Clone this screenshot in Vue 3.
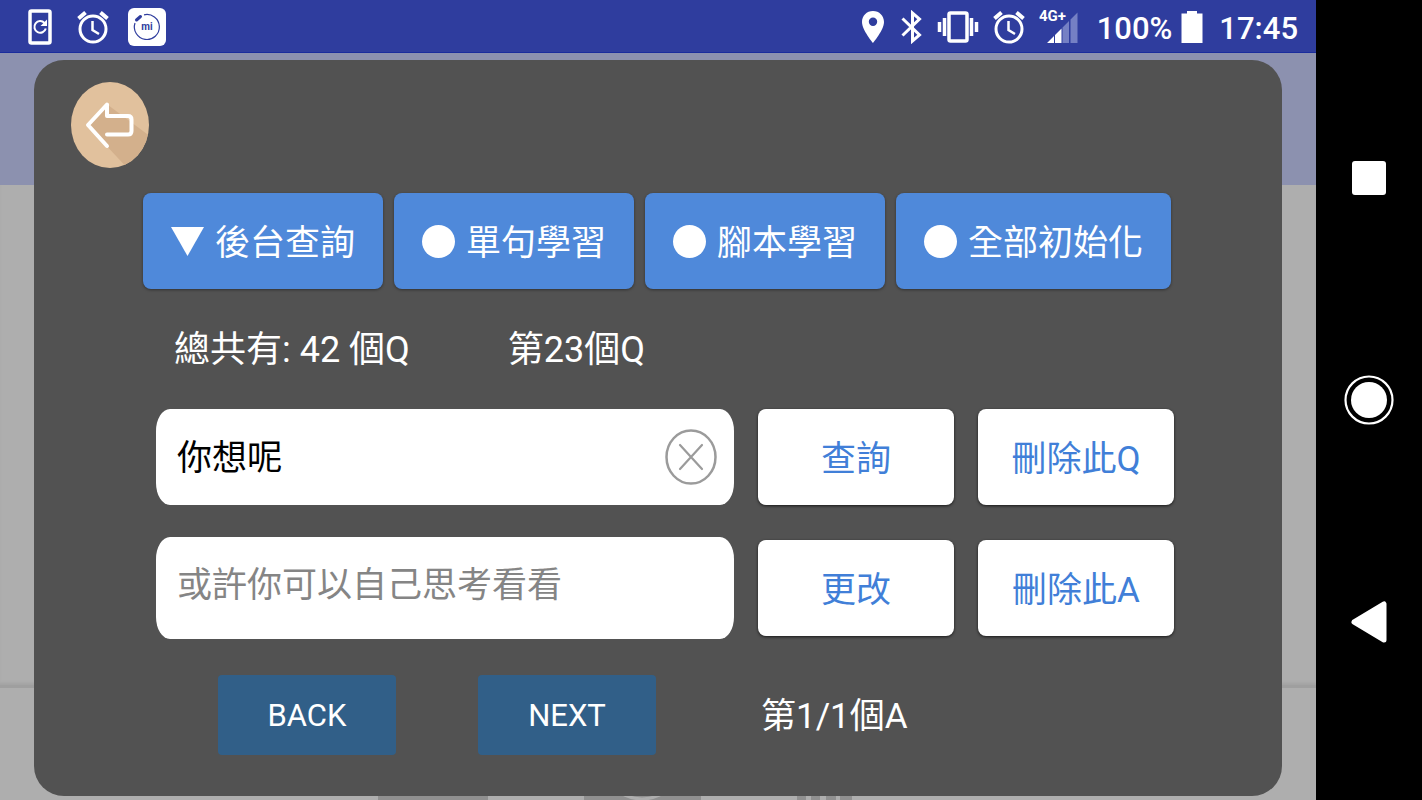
<script setup>
import { ref } from 'vue'

const tabs = [
  { id: 'query', label: '後台查詢' },
  { id: 'sentence', label: '單句學習' },
  { id: 'script', label: '腳本學習' },
  { id: 'reset', label: '全部初始化' },
]

const activeTab = ref('query')
const question = ref('你想呢')
const answer = ref('')
</script>

<template>
  <div class="device">
    <div class="screen">
      <header class="status">
        <div class="status__group status__group--left">
          <svg width="26" height="36" viewBox="0 0 26 36" fill="none" stroke="#fff">
            <rect x="3" y="2" width="20" height="32" rx="1.500" stroke-width="3.500" />
            <path d="M17.500 14A5.800 5.800 0 1 0 18.800 19.500" stroke-width="2" />
            <path d="M20 10.500v6.500h-6.500z" fill="#fff" stroke="none" />
          </svg>
          <svg width="32" height="34" viewBox="0 0 32 34" fill="none" stroke="#fff">
            <circle cx="16" cy="19" r="13" stroke-width="3" />
            <path d="M15.500 11v9l6.500 4" stroke-width="2.500" />
            <path d="M1.500 8.500 8.500 2.500M30.500 8.500 23.500 2.500" stroke-width="4" />
          </svg>
          <svg class="status__app" width="38" height="38" viewBox="0 0 38 38">
            <rect width="38" height="38" rx="6" fill="#fff" />
            <path d="M16 6.800A12.500 12.500 0 1 1 7 15" fill="none" stroke="#2f3d9e" stroke-width="1.200" />
            <path d="M8.500 12 12.500 8.500" stroke="#2f3d9e" stroke-width="3" stroke-linecap="round" />
            <text x="19" y="22" text-anchor="middle" class="mi">mi</text>
          </svg>
        </div>
        <div class="status__group status__group--right">
          <svg width="24" height="34" viewBox="0 0 24 34" fill="#fff">
            <path fill-rule="evenodd" d="M12 1C5.700 1 1 5.800 1 12c0 8 11 21 11 21s11-13 11-21C23 5.800 18.300 1 12 1zm0 15a4.200 4.200 0 1 1 0-8.400 4.200 4.200 0 0 1 0 8.400z" />
          </svg>
          <svg class="status__bt" width="22" height="34" viewBox="0 0 22 34" fill="none" stroke="#fff" stroke-width="3">
            <path d="M1.500 8.500 18.500 25 11.500 31V3L18.500 9 1.500 25.500" />
          </svg>
          <svg width="42" height="32" viewBox="0 0 42 32" fill="none" stroke="#fff" stroke-width="3.500">
            <rect x="12" y="2" width="18" height="28" rx="1.500" />
            <path d="M7.500 7v18M34.500 7v18M2.500 11v10M39.500 11v10" />
          </svg>
          <svg width="32" height="34" viewBox="0 0 32 34" fill="none" stroke="#fff">
            <circle cx="16" cy="19" r="13" stroke-width="3" />
            <path d="M15.500 11v9l6.500 4" stroke-width="2.500" />
            <path d="M1.500 8.500 8.500 2.500M30.500 8.500 23.500 2.500" stroke-width="4" />
          </svg>
          <svg width="40" height="44" viewBox="0 -4 40 44">
            <path d="M8 34 15 27V34zM16 26 22.500 19.500V34H16z" fill="#fff" />
            <path d="M23.500 18.500l6.500-6.500V34h-6.500zM31.500 10.500 38.500 3.500V34h-7z" fill="#7580c4" />
            <text x="0" y="12" class="net">4G+</text>
          </svg>
          <span class="status__battery">100%</span>
          <svg width="22" height="34" viewBox="0 0 22 34" fill="#fff">
            <path d="M6 1h10v2.500h5.500V33H.500V3.500H6z" />
          </svg>
          <span class="status__time">17:45</span>
        </div>
      </header>

      <div class="stage">
        <div class="backdrop">
          <div class="backdrop__bar"></div>
          <div class="backdrop__page"></div>
          <div class="backdrop__foot">
            <svg width="100%" height="5" viewBox="0 0 1316 5" preserveAspectRatio="none" fill="#909090">
              <path d="M378 0h110v5H378zM584 0h117v5H584zM797 0h9v5h-9zM811 0h9v5h-9zM826 0h10v5h-10zM840 0h12v5h-12z" />
              <path d="M624 0q18 8 36 0" fill="none" stroke="#aeaeae" stroke-width="3" />
            </svg>
          </div>
        </div>

        <main class="panel">
          <button type="button" class="back" aria-label="返回">
            <svg width="78" height="86" viewBox="0 0 78 86">
              <defs>
                <clipPath id="disc"><ellipse cx="39" cy="43" rx="39" ry="43" /></clipPath>
              </defs>
              <ellipse cx="39" cy="43" rx="39" ry="43" fill="#e1c19d" />
              <path d="M37 23 84 58 60 90 17 44z" fill="#d3b08c" clip-path="url(#disc)" />
              <path
                d="M36 64 17 43 36 22.500V34h21q3.500 0 3.500 3.500v11.500q0 3.500-3.500 3.500H36"
                fill="none" stroke="#fff" stroke-width="4" stroke-linecap="round" stroke-linejoin="round"
              />
            </svg>
          </button>

          <div class="body">
            <nav class="tabs">
              <button
                v-for="t in tabs"
                :key="t.id"
                type="button"
                class="tab"
                @click="activeTab = t.id"
              >
                <svg width="33" height="33" viewBox="0 0 33 33" fill="#fff">
                  <path v-if="t.id === activeTab" d="M0 2h33L16.500 31z" />
                  <circle v-else cx="16.500" cy="16.500" r="16.500" />
                </svg>
                <span class="tab__label">{{ t.label }}</span>
              </button>
            </nav>

            <div class="info">
              <span>總共有: 42 個Q</span>
              <span>第23個Q</span>
            </div>

            <form class="form" @submit.prevent>
              <div class="row">
                <div class="field">
                  <input v-model="question" class="field__input" type="text" aria-label="Q" />
                  <button type="button" class="field__clear" aria-label="清除" @click="question = ''">
                    <svg width="52" height="56" viewBox="0 0 52 56" fill="none" stroke="#9b9b9b">
                      <ellipse cx="26" cy="28" rx="24.500" ry="26.500" stroke-width="2.500" />
                      <path d="M15 16 37 40M37 16 15 40" stroke-width="2.200" stroke-linecap="round" />
                    </svg>
                  </button>
                </div>
                <button type="button" class="action">查詢</button>
                <button type="button" class="action">刪除此Q</button>
              </div>
              <div class="row">
                <div class="field field--answer">
                  <input
                    v-model="answer"
                    class="field__input"
                    type="text"
                    placeholder="或許你可以自己思考看看"
                    aria-label="A"
                  />
                </div>
                <button type="button" class="action">更改</button>
                <button type="button" class="action">刪除此A</button>
              </div>
            </form>

            <div class="pager">
              <button type="button" class="step">BACK</button>
              <button type="button" class="step">NEXT</button>
              <span class="pager__text">第1/1個A</span>
            </div>
          </div>
        </main>
      </div>
    </div>

    <nav class="keys">
      <button type="button" class="key" aria-label="Recents">
        <svg width="50" height="50" viewBox="0 0 50 50" fill="#fff">
          <rect x="8" y="8" width="34" height="34" rx="3" />
        </svg>
      </button>
      <button type="button" class="key" aria-label="Home">
        <svg width="50" height="50" viewBox="0 0 50 50" fill="#fff">
          <circle cx="25" cy="25" r="23.500" fill="none" stroke="#fff" stroke-width="2.200" />
          <circle cx="25" cy="25" r="18" />
        </svg>
      </button>
      <button type="button" class="key" aria-label="Back">
        <svg width="50" height="50" viewBox="0 0 50 50" fill="#fff" stroke="#fff">
          <path d="M10 25 40 7v36z" stroke-width="5" stroke-linejoin="round" />
        </svg>
      </button>
    </nav>
  </div>
</template>

<style>
body {
  margin: 0;
  background: #000;
}
</style>

<style scoped>
.device {
  display: flex;
  min-height: 100vh;
  font-family: Roboto, 'Noto Sans CJK TC', sans-serif;
  font-size: 35px;
  line-height: 42px;
  color: #fff;
}
button,
input {
  margin: 0;
  padding: 0;
  border: 0;
  background: transparent;
  font: inherit;
  color: inherit;
}
button {
  cursor: pointer;
}
svg {
  display: block;
  flex: none;
}
.screen {
  flex: 1;
  min-width: 0;
  display: flex;
  flex-direction: column;
}

.status {
  display: flex;
  justify-content: space-between;
  align-items: center;
  box-sizing: border-box;
  height: 53px;
  padding: 2px 18px 0 27px;
  background: #2f3d9e;
  border-bottom: 1px solid #1a2c9c;
  font-size: 31px;
  font-weight: 500;
}
.status__group {
  display: flex;
  align-items: center;
}
.status__group--left {
  gap: 24px;
}
.status__app {
  margin-left: -5px;
}
.status__group--right {
  gap: 14px;
}
.status__bt {
  margin-left: 2px;
}
.status__battery,
.status__time {
  padding-top: 3px;
}
.status__battery {
  margin-left: 4px;
  margin-right: -5px;
}
.status__time {
  margin-left: 2px;
}
.mi {
  font: 700 10px Roboto, sans-serif;
  fill: #2f3d9e;
}
.net {
  font: 700 15px Roboto, sans-serif;
  fill: #fff;
}

.stage {
  flex: 1;
  display: grid;
}
.backdrop,
.panel {
  grid-area: 1 / 1;
}
.backdrop {
  display: flex;
  flex-direction: column;
  background: #aeaeae;
}
.backdrop__bar {
  height: 132px;
  background: #8c91af;
}
.backdrop__page {
  flex: 1;
  border-bottom: 3px solid #9f9f9f;
  box-shadow: inset 0 -3px 3px -1px #a3a3a3;
}
.backdrop__foot {
  display: flex;
  align-items: flex-end;
  height: 112px;
}

.panel {
  margin: 7px 34px 4px;
  padding: 22px 37px 0;
  border-radius: 30px;
  background: #525252;
}
.back {
  display: block;
}
.body {
  padding: 25px 71px 0 72px;
}
.tabs {
  display: flex;
  gap: 11px;
}
.tab {
  display: flex;
  align-items: center;
  gap: 11px;
  height: 96px;
  padding: 0 28px;
  border-radius: 8px;
  background: #4f89da;
  box-shadow: 0 1px 3px rgba(0, 0, 0, 0.4);
  white-space: nowrap;
}
.tab__label {
  padding-top: 5px;
}
.info {
  display: flex;
  gap: 98px;
  padding: 40px 31px 38px;
  font-size: 36px;
}
.form {
  display: flex;
  flex-direction: column;
  gap: 32px;
  padding-left: 13px;
}
.row {
  display: flex;
  align-items: center;
  gap: 24px;
}
.field {
  flex: 1;
  min-width: 0;
  display: flex;
  align-items: center;
  box-sizing: border-box;
  height: 96px;
  padding: 0 17px 0 21px;
  border-radius: 14px / 22px;
  background: #fff;
  color: #000;
}
.field--answer {
  height: 102px;
}
.field__input {
  flex: 1;
  min-width: 0;
  height: 52px;
  padding-bottom: 6px;
  outline: none;
}
.field__input::placeholder {
  color: #858585;
  opacity: 1;
}
.action {
  width: 196px;
  height: 96px;
  padding-top: 5px;
  border-radius: 8px;
  background: #fff;
  box-shadow: 0 1px 3px rgba(0, 0, 0, 0.7);
  color: #417fd8;
}
.pager {
  display: flex;
  align-items: center;
  padding: 36px 0 0 75px;
}
.step {
  width: 178px;
  height: 80px;
  padding-top: 2px;
  margin-right: 82px;
  border-radius: 4px;
  background: #315f88;
  font-size: 31px;
}
.pager__text {
  margin-left: 23px;
  padding-top: 3px;
}

.keys {
  display: flex;
  flex-direction: column;
  justify-content: center;
  align-items: center;
  gap: 172px;
  width: 106px;
  background: #000;
}
</style>
